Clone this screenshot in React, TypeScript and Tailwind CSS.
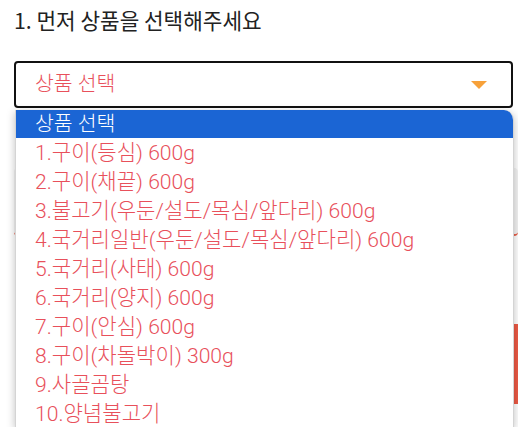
const items = [
  "1.구이(등심) 600g",
  "2.구이(채끝) 600g",
  "3.불고기(우둔/설도/목심/앞다리) 600g",
  "4.국거리일반(우둔/설도/목심/앞다리) 600g",
  "5.국거리(사태) 600g",
  "6.국거리(양지) 600g",
  "7.구이(안심) 600g",
  "8.구이(차돌박이) 300g",
  "9.사골곰탕",
  "10.양념불고기",
];

export default function App() {
  return (
    <div className="relative h-[427px] w-[518px] overflow-hidden bg-white font-['Noto_Sans_CJK_KR',sans-serif]">
      <div className="pl-[14px] pt-[5px]">
        <h2 className="text-[21.3px] leading-[30px] text-[#222]">1. 먼저 상품을 선택해주세요</h2>
        <div className="mt-[26px] flex h-[47px] w-[499px] items-center justify-between rounded-[4px] border-2 border-[#111] pl-[19px] pr-[24px]">
          <span className="font-['Roboto','Noto_Sans_CJK_KR',sans-serif] text-[20.5px] font-light text-[#e8505b]">상품 선택</span>
          <svg width="16" height="8" viewBox="0 0 16 8">
            <path d="M0 0h16L8 8z" fill="#f7a13a" />
          </svg>
        </div>
        <div className="mt-[60px] h-[68px] w-[504px] rounded-[4px] border-b-2 border-[#e8604a] bg-[#f3f3f3]" />
        <div className="ml-[2px] mt-[88px] h-[80px] w-[502px] bg-[#ec5a45]" />
      </div>

      <div className="absolute left-[15px] top-[110px] w-[499px] overflow-hidden rounded-tr-[10px] border-l border-r border-[#d4d4d4] bg-white font-['Roboto','Noto_Sans_CJK_KR',sans-serif] font-light shadow-[0_2px_8px_rgba(0,0,0,0.25)]">
        <div className="flex h-[28px] items-center bg-[#1b65d4] pl-[19px] text-[20.5px] text-white">
          상품 선택
        </div>
        {items.map((item) => (
          <div
            key={item}
            className="flex h-[29px] items-center pl-[19px] text-[21.1px] text-[#e8505b]"
          >
            {item}
          </div>
        ))}
      </div>
    </div>
  );
}
